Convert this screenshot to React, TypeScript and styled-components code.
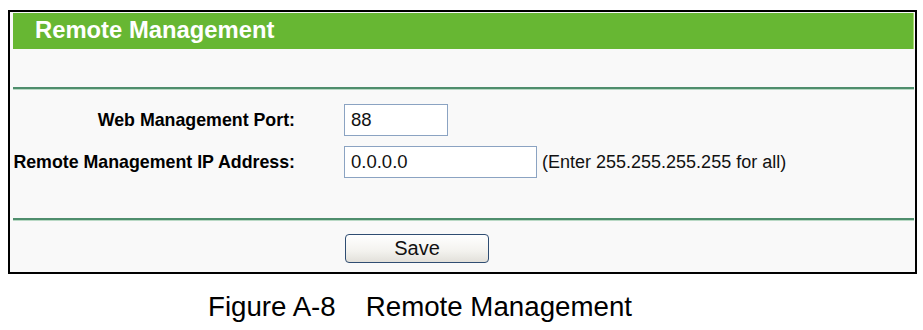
import React from "react";
import styled, { createGlobalStyle } from "styled-components";

const GlobalStyle = createGlobalStyle`
    body {
        margin: 0;
        background: #ffffff;
        font-family: "Liberation Sans", Arial, sans-serif;
    }
`

const Page = styled.div`
    width: 923px;
    height: 330px;
    padding-top: 10px;
    box-sizing: border-box;
    overflow: hidden;
`

const Frame = styled.div`
    margin-left: 8px;
    width: 909px;
    height: 264px;
    box-sizing: border-box;
    border: 2px solid #000000;
    padding: 1px 1px 0 3px;
    background: #f9f9f9;
    display: flex;
    flex-direction: column;
`

const Header = styled.div`
    height: 36px;
    background: #67b733;
    border-right: 1px solid #a8d86e;
    box-sizing: border-box;
    padding-left: 22px;
    color: #ffffff;
    font-weight: 700;
    font-size: 23.8px;
    line-height: 34px;
`

const Band = styled.div`
    height: 38px;
`

const Divider = styled.div`
    height: 2px;
    background: #4f8e6d;
    border-bottom: 1px solid #b9d9c5;
`

const FormBody = styled.div`
    display: flex;
    flex-direction: column;
    gap: 10px;
    padding: 14px 0 40px;
`

const Row = styled.div`
    display: flex;
    align-items: center;
    height: 32px;
`

const Label = styled.div`
    width: 282px;
    text-align: right;
    font-weight: 700;
    font-size: 17.8px;
    color: #000000;
    white-space: nowrap;
`

interface FieldProps {
    $width: number
}

const Field = styled.div<FieldProps>`
    margin-left: 49px;
    width: ${({ $width }: FieldProps) => $width}px;
    height: 32px;
    box-sizing: border-box;
    border: 1px solid #8ba3c2;
    background: #ffffff;
    padding-left: 6px;
    font-size: 18.5px;
    line-height: 30px;
    color: #111111;
`

const Hint = styled.span`
    margin-left: 5px;
    font-size: 18px;
    color: #111111;
    white-space: nowrap;
`

const Actions = styled.div`
    padding: 13px 0 0 332px;
`

const SaveButton = styled.button`
    width: 144px;
    height: 29px;
    box-sizing: border-box;
    border: 1px solid #2f4d72;
    border-radius: 4px;
    background: linear-gradient(#ffffff, #f3f2ee 60%, #e2e0da);
    font-family: "Liberation Sans", Arial, sans-serif;
    font-size: 20px;
    line-height: 27px;
    color: #111111;
    padding: 0;
`

const Caption = styled.div`
    margin: 19px 0 0 208px;
    font-size: 27.7px;
    line-height: 28px;
    color: #000000;
    white-space: nowrap;
`

const CaptionTitle = styled.span`
    margin-left: 30px;
`

export default function App() {
    return (
        <Page>
            <GlobalStyle />
            <Frame>
                <Header>Remote Management</Header>
                <Band />
                <Divider />
                <FormBody>
                    <Row>
                        <Label>Web Management Port:</Label>
                        <Field $width={104}>88</Field>
                    </Row>
                    <Row>
                        <Label>Remote Management IP Address:</Label>
                        <Field $width={193}>0.0.0.0</Field>
                        <Hint>(Enter 255.255.255.255 for all)</Hint>
                    </Row>
                </FormBody>
                <Divider />
                <Actions>
                    <SaveButton>Save</SaveButton>
                </Actions>
            </Frame>
            <Caption>
                Figure A-8<CaptionTitle>Remote Management</CaptionTitle>
            </Caption>
        </Page>
    );
}
